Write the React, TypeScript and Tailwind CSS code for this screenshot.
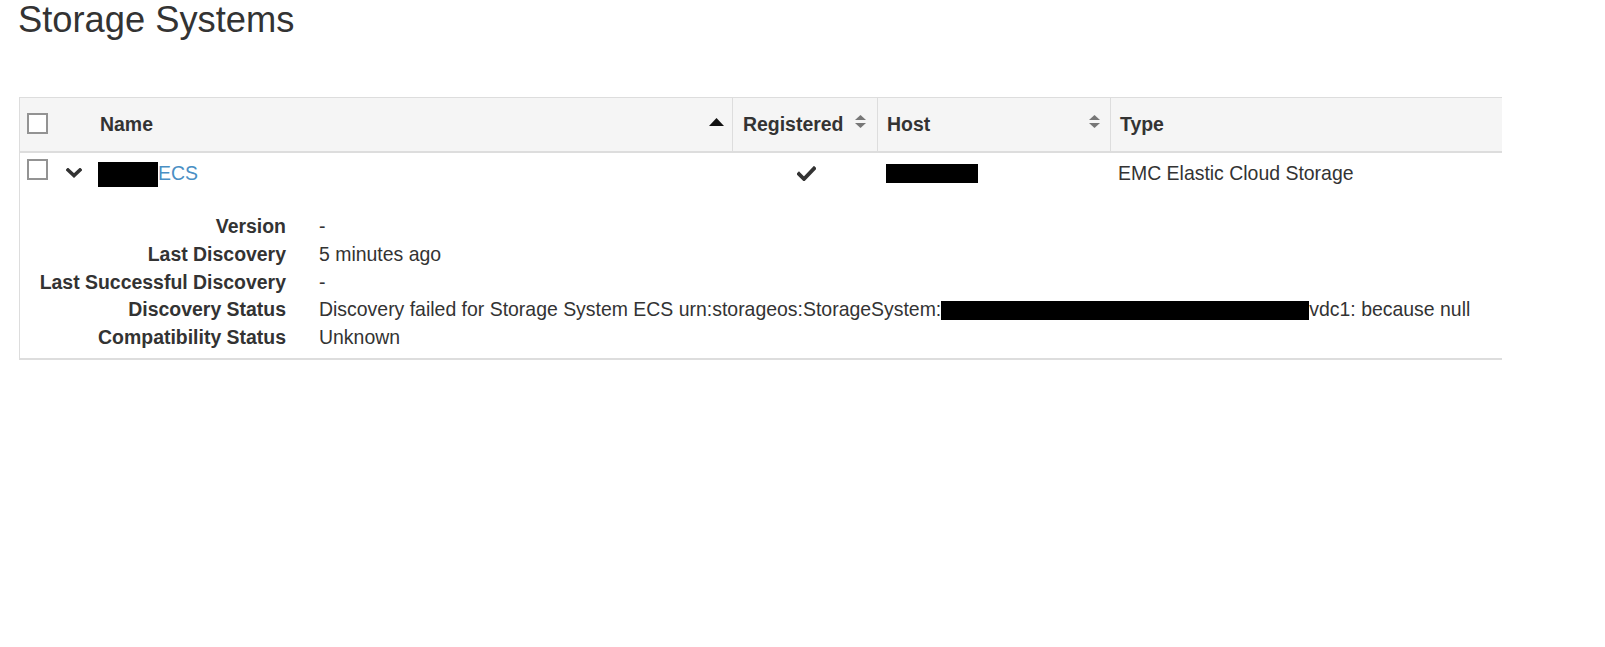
import React from 'react';

function Checkbox() {
  return <div className="h-[21px] w-[21px] shrink-0 border-2 border-[#939393] bg-white" />;
}

function SortUp() {
  return (
    <svg width="15" height="8" viewBox="0 0 15 8" className="shrink-0">
      <path d="M0 8 L7.5 0 L15 8 Z" fill="#111" />
    </svg>
  );
}

function SortBoth() {
  return (
    <svg width="11" height="13" viewBox="0 0 11 13" className="shrink-0">
      <path d="M0 5 L5.5 0 L11 5 Z" fill="#777" />
      <path d="M0 8 L5.5 13 L11 8 Z" fill="#777" />
    </svg>
  );
}

function ChevronDown() {
  return (
    <svg width="16" height="10" viewBox="0 0 16 10" className="shrink-0">
      <path d="M2 2 L8 7.5 L14 2" fill="none" stroke="#333" strokeWidth="3.6" strokeLinecap="square" />
    </svg>
  );
}

function Check() {
  return (
    <svg width="19" height="15" viewBox="0 0 19 15" className="shrink-0">
      <path d="M2 8 L7 13 L17 2.5" fill="none" stroke="#333" strokeWidth="3.8" strokeLinecap="square" />
    </svg>
  );
}

const details = [
  { label: 'Version', value: '-' },
  { label: 'Last Discovery', value: '5 minutes ago' },
  { label: 'Last Successful Discovery', value: '-' },
  { label: 'Discovery Status', value: 'status' },
  { label: 'Compatibility Status', value: 'Unknown' },
];

export default function App() {
  const cols = 'grid grid-cols-[71px_641px_145px_233px_392px]';

  return (
    <div className="min-h-screen bg-white font-['Liberation_Sans',Arial,sans-serif] text-[#333]">
      <h1 className="pl-[18px] text-[36.3px] font-normal leading-[40px]">Storage Systems</h1>

      <div className="ml-[19px] mt-[57px] w-[1483px] border-b-2 border-l border-[#dddddd] text-[19.45px]">
        {/* Header */}
        <div className={`${cols} h-[56px] border-b-2 border-t border-[#dddddd] bg-[#f5f5f5] font-bold leading-[21px]`}>
          <div className="pl-[7px] pt-[15px]">
            <Checkbox />
          </div>
          <div className="flex items-start justify-between pl-[9px] pr-[8px] pt-[16px]">
            <span>Name</span>
            <div className="mt-[4px]">
              <SortUp />
            </div>
          </div>
          <div className="flex items-start justify-between border-l border-[#dddddd] pl-[10px] pr-[11px] pt-[16px]">
            <span>Registered</span>
            <div className="mt-[1px]">
              <SortBoth />
            </div>
          </div>
          <div className="flex items-start justify-between border-l border-[#dddddd] pl-[9px] pr-[10px] pt-[16px]">
            <span>Host</span>
            <div className="mt-[1px]">
              <SortBoth />
            </div>
          </div>
          <div className="border-l border-[#dddddd] pl-[9px] pt-[16px]">
            <span>Type</span>
          </div>
        </div>

        {/* Row */}
        <div className={`${cols} h-[47px] leading-[21px]`}>
          <div className="flex items-start pl-[7px]">
            <div className="mt-[6px]">
              <Checkbox />
            </div>
            <div className="ml-[18px] mt-[15px]">
              <ChevronDown />
            </div>
          </div>
          <div className="flex items-start pl-[7px]">
            <div className="mt-[9px] h-[25px] w-[60px] bg-black" />
            <a className="pt-[10px] text-[#4a8fc4]" href="#">
              ECS
            </a>
          </div>
          <div className="pl-[65px] pt-[13px]">
            <Check />
          </div>
          <div className="pl-[9px] pt-[11px]">
            <div className="h-[19px] w-[92px] bg-black" />
          </div>
          <div className="pl-[8px] pt-[10px]">EMC Elastic Cloud Storage</div>
        </div>

        {/* Details */}
        <div className="grid grid-cols-[266px_auto] gap-x-[33px] pb-[6px] pt-[13px] leading-[27.75px]">
          {details.map((d) => (
            <React.Fragment key={d.label}>
              <div className="text-right font-bold">{d.label}</div>
              <div className="whitespace-nowrap">
                {d.value === 'status' ? (
                  <>
                    Discovery failed for Storage System ECS urn:storageos:StorageSystem:
                    <span className="inline-block h-[19px] w-[368px] bg-black align-[-4px]" />
                    vdc1: because null
                  </>
                ) : (
                  d.value
                )}
              </div>
            </React.Fragment>
          ))}
        </div>
      </div>
    </div>
  );
}
